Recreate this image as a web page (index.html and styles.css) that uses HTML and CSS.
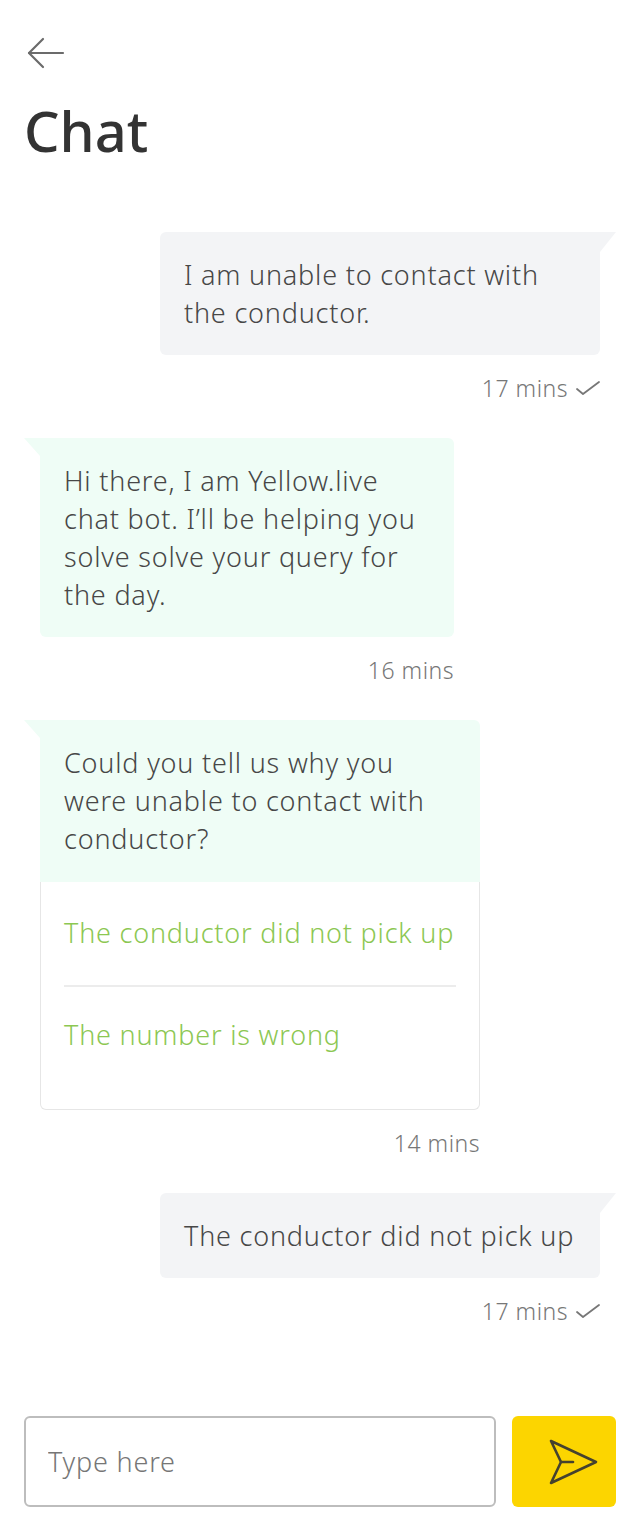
FILE: index.html
```html
<!DOCTYPE html>
<html lang="en">
<head>
<meta charset="utf-8">
<title>Chat</title>
<link rel="stylesheet" href="styles.css">
</head>
<body>
<div class="screen">
  <header class="top">
    <button class="back" aria-label="Back">
      <svg width="40" height="32" viewBox="0 0 40 32" fill="none" stroke="#6b6b6b" stroke-width="2.2" stroke-linecap="round" stroke-linejoin="round">
        <path d="M3 16 H37"/>
        <path d="M17 2 L3 16 L17 30"/>
      </svg>
    </button>
    <h1 class="title">Chat</h1>
  </header>

  <main class="thread">
    <div class="msg msg--out">
      <div class="bubble bubble--out">I am unable to contact with<br>the conductor.</div>
      <div class="meta">17 mins
        <svg class="tick" width="26" height="16" viewBox="0 0 26 16" fill="none" stroke="#777" stroke-width="1.8" stroke-linecap="round" stroke-linejoin="round"><path d="M2 9 L8 14 L24 2"/></svg>
      </div>
    </div>

    <div class="msg msg--in msg--narrow">
      <div class="bubble bubble--in">Hi there, I am Yellow.live<br>chat bot. I’ll be helping you<br>solve solve your query for<br>the day.</div>
      <div class="meta">16 mins</div>
    </div>

    <div class="msg msg--in">
      <div class="bubble bubble--in bubble--question">Could you tell us why you<br>were unable to contact with<br>conductor?</div>
      <div class="options">
        <div class="option option--first">The conductor did not pick up</div>
        <div class="option option--last">The number is wrong</div>
      </div>
      <div class="meta">14 mins</div>
    </div>

    <div class="msg msg--out">
      <div class="bubble bubble--out">The conductor did not pick up</div>
      <div class="meta">17 mins
        <svg class="tick" width="26" height="16" viewBox="0 0 26 16" fill="none" stroke="#777" stroke-width="1.8" stroke-linecap="round" stroke-linejoin="round"><path d="M2 9 L8 14 L24 2"/></svg>
      </div>
    </div>
  </main>

  <footer class="composer">
    <input class="field" type="text" placeholder="Type here">
    <button class="send" aria-label="Send">
      <svg width="60" height="56" viewBox="0 0 60 56" fill="none" stroke="#45422e" stroke-width="2.6" stroke-linejoin="round" stroke-linecap="round">
        <path d="M11 7 L56 28 L11 49 L21 28 Z"/>
        <path d="M21 28 H33"/>
      </svg>
    </button>
  </footer>
</div>
</body>
</html>
```

FILE: styles.css
```css
* { box-sizing: border-box; }

html, body {
  margin: 0;
  padding: 0;
  background: #ffffff;
}

body {
  font-family: "Noto Sans", "Open Sans", sans-serif;
  color: #474747;
}

.screen {
  width: 640px;
  padding: 0 24px;
}

.top {
  padding-top: 37px;
}

.back {
  display: block;
  margin: 0 0 0 2px;
  padding: 0;
  border: 0;
  background: none;
  width: 40px;
  height: 32px;
}

.back svg { display: block; }

.title {
  margin: 29px 0 0 0;
  font-size: 56px;
  line-height: 64px;
  font-weight: 550;
  color: #333333;
  letter-spacing: 0;
}

.thread {
  margin-top: 70px;
  display: flex;
  flex-direction: column;
  gap: 35px;
}

.msg {
  display: flex;
  flex-direction: column;
  width: 440px;
}

.msg--out {
  align-self: flex-end;
  margin-right: 16px;
}

.msg--in {
  align-self: flex-start;
  margin-left: 16px;
}

.msg--narrow { width: 414px; }

.bubble {
  position: relative;
  font-size: 27px;
  line-height: 38px;
  font-weight: 360;
  letter-spacing: 0.8px;
  padding: 24px 24px 23px;
}

.bubble--out {
  background: #f3f4f6;
  border-radius: 0 0 6px 6px;
  border-top-left-radius: 6px;
}

.bubble--out::after {
  content: "";
  position: absolute;
  top: 0;
  right: -16px;
  width: 16px;
  height: 20px;
  background: #f3f4f6;
  clip-path: polygon(0 0, 100% 0, 0 100%);
}

.bubble--in {
  background: #effdf6;
  border-radius: 0 6px 6px 6px;
}

.bubble--in::before {
  content: "";
  position: absolute;
  top: 0;
  left: -16px;
  width: 16px;
  height: 18px;
  background: #effdf6;
  clip-path: polygon(0 0, 100% 0, 100% 100%);
}

.bubble--question {
  border-radius: 0 6px 0 0;
  padding-bottom: 24px;
}

.options {
  border: 1.5px solid #e6e6e6;
  border-top: 0;
  border-radius: 0 0 6px 6px;
  padding: 0 23px;
}

.option {
  font-size: 27px;
  line-height: 38px;
  font-weight: 360;
  letter-spacing: 0.8px;
  color: #8cc752;
}

.option--first {
  padding: 32px 0 33px;
  border-bottom: 2px solid #ececec;
}

.option--last {
  padding: 29px 0 55px;
}

.meta {
  margin-top: 18px;
  display: flex;
  justify-content: flex-end;
  align-items: center;
  gap: 7px;
  font-size: 23px;
  line-height: 30px;
  font-weight: 340;
  letter-spacing: 0.5px;
  color: #777777;
}

.tick {
  display: block;
  margin-right: -1px;
}

.composer {
  margin-top: 90px;
  display: flex;
  gap: 16px;
  height: 91px;
}

.field {
  flex: 1;
  height: 91px;
  border: 2px solid #bdbdbd;
  border-radius: 6px;
  padding: 0 22px;
  font-family: "Noto Sans", "Open Sans", sans-serif;
  font-size: 27px;
  font-weight: 340;
  letter-spacing: 0.8px;
  color: #474747;
  background: #fff;
  outline: none;
}

.field::placeholder {
  color: #767676;
}

.send {
  width: 104px;
  height: 91px;
  border: 0;
  border-radius: 6px;
  background: #fcd500;
  padding: 0;
  display: flex;
  align-items: center;
  justify-content: center;
}

.send svg {
  display: block;
  margin-left: 12px;
}
```
